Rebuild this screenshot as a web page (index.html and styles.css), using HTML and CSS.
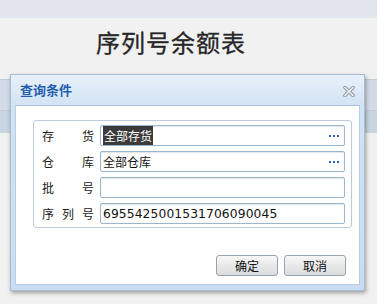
FILE: index.html
```html
<!DOCTYPE html>
<html lang="zh-CN">
<head>
<meta charset="utf-8">
<title>序列号余额表</title>
<link rel="stylesheet" href="styles.css">
</head>
<body>
<div class="page">
  <div class="topband"></div>
  <div class="header"><h1 class="title">序列号余额表</h1></div>
  <div class="band"><div class="band-a"></div><div class="band-b"></div></div>
</div>

<div class="dialog">
  <div class="titlebar">
    <span class="dlg-title">查询条件</span>
    <svg class="close" width="12" height="11" viewBox="0 0 12 11">
      <path d="M2 1.5 L10 9.5 M10 1.5 L2 9.5" stroke="#9a9ea4" stroke-width="3.6" stroke-linecap="square" fill="none"/>
      <path d="M2 1.5 L10 9.5 M10 1.5 L2 9.5" stroke="#eef2f6" stroke-width="1.4" stroke-linecap="square" fill="none"/>
    </svg>
  </div>
  <div class="body">
    <div class="frame">
      <div class="row">
        <span class="label"><span>存</span><span>货</span></span>
        <div class="input"><span class="sel">全部存货</span><span class="more"><i></i><i></i><i></i></span></div>
      </div>
      <div class="row">
        <span class="label"><span>仓</span><span>库</span></span>
        <div class="input"><span>全部仓库</span><span class="more"><i></i><i></i><i></i></span></div>
      </div>
      <div class="row">
        <span class="label"><span>批</span><span>号</span></span>
        <div class="input"></div>
      </div>
      <div class="row">
        <span class="label"><span>序</span><span>列</span><span>号</span></span>
        <div class="input num">6955425001531706090045</div>
      </div>
    </div>
    <div class="actions">
      <button class="btn">确定</button>
      <button class="btn">取消</button>
    </div>
  </div>
</div>
</body>
</html>
```

FILE: styles.css
```css
html, body {
  margin: 0;
  padding: 0;
}
body {
  width: 377px;
  height: 304px;
  overflow: hidden;
  background: #f1f1f1;
  font-family: "Noto Sans CJK SC", "Noto Sans", sans-serif;
  position: relative;
}
.page {
  display: flex;
  flex-direction: column;
}
.topband {
  height: 18px;
  background: #e1e6ed;
}
.header {
  height: 62px;
  background: #f1f1f1;
  border-bottom: 1px solid #c3cbd4;
  box-sizing: border-box;
  padding-left: 96px;
}
.title {
  margin: 0;
  padding-top: 8px;
  font-size: 24px;
  line-height: 32px;
  font-weight: normal;
  color: #262626;
  letter-spacing: 1px;
  -webkit-text-stroke: 0.3px #262626;
}
.band {
  display: flex;
  flex-direction: column;
}
.band-a {
  height: 30px;
  background: #d3dce6;
  border-bottom: 1px solid #c2cdd8;
}
.band-b {
  height: 22px;
  background: #c9d5e0;
}

.dialog {
  position: absolute;
  left: 10px;
  top: 74px;
  width: 355px;
  height: 217px;
  box-sizing: border-box;
  border: 1px solid #a7bdd4;
  background: linear-gradient(#e8f1fb, #d2e3f4 14%, #c9ddf2);
  padding: 0 4px 5px 4px;
  box-shadow: 1px 2px 4px rgba(0, 0, 0, 0.35);
  display: flex;
  flex-direction: column;
}
.titlebar {
  height: 30px;
  display: flex;
  align-items: center;
  justify-content: space-between;
  padding: 0 5px 0 5px;
}
.dlg-title {
  font-size: 13px;
  font-weight: bold;
  color: #1f5fae;
  margin-top: -2px;
}
.close {
  margin-top: 2px;
}
.body {
  flex: 1;
  background: #ffffff;
  border: 1px solid #b8cde3;
  border-top-color: #a9c1da;
  display: flex;
  flex-direction: column;
  padding: 14px 7px 0 17px;
}
.frame {
  border: 1px solid #bccadb;
  border-radius: 3px;
  padding: 4px 6px 3px 8px;
  display: flex;
  flex-direction: column;
  gap: 5px;
}
.row {
  display: flex;
  align-items: center;
  height: 21px;
}
.label {
  width: 52px;
  margin-right: 6px;
  display: flex;
  justify-content: space-between;
  font-size: 12px;
  color: #222;
}
.input {
  flex: 1;
  height: 21px;
  box-sizing: border-box;
  border: 1px solid #9bb6cf;
  border-radius: 2px;
  box-shadow: inset 0 1px 1px rgba(120, 150, 180, 0.25);
  display: flex;
  align-items: center;
  justify-content: space-between;
  padding: 0 4px 0 2px;
  font-size: 12px;
  color: #111;
}
.sel {
  background: #3b3b3b;
  color: #ffffff;
  padding: 1px 1px;
}
.more {
  display: flex;
  gap: 2px;
  margin-right: 1px;
}
.more i {
  display: block;
  width: 2px;
  height: 2px;
  background: #2a62b8;
}
.num {
  font-family: "DejaVu Sans", sans-serif;
  font-size: 12.3px;
  letter-spacing: 0.1px;
}
.actions {
  margin-top: 27px;
  padding-right: 6px;
  display: flex;
  justify-content: flex-end;
  gap: 6px;
}
.btn {
  width: 62px;
  height: 21px;
  border: 1px solid #9aa4b0;
  border-radius: 3px;
  background: linear-gradient(#f7f7f7, #e9e9e9 50%, #d9dcdf);
  font-family: "Noto Sans CJK SC", sans-serif;
  font-size: 12px;
  color: #111;
  padding: 0;
  line-height: 19px;
}
```
